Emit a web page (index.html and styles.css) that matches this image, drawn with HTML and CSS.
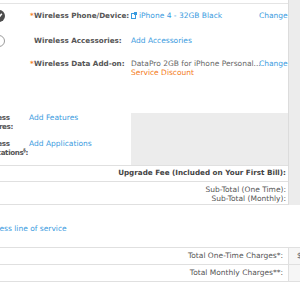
FILE: index.html
```
<!DOCTYPE html>
<html lang="en">
<head>
    <meta charset="UTF-8">
    <title>Review Your Order</title>
    <link rel="stylesheet" href="styles.css">
</head>
<body>
    <div class="page">
        <div class="upper">
            <div class="main">
                <div class="lines">
                    <div class="line">
                        <span class="step">
                            <svg width="12" height="12" viewBox="0 0 12 12"><circle cx="6" cy="6" r="6" fill="#4d4d4d"/><path d="M3.4 6.2 L5.2 8 L8.8 3.8" fill="none" stroke="#fff" stroke-width="1.6"/></svg>
                        </span>
                        <span class="label"><span class="star">*</span>Wireless Phone/Device:</span>
                        <a class="value link" href="#">
                            <svg class="ext" width="6" height="7" viewBox="0 0 6 7"><rect x="0.5" y="1.5" width="4" height="5" fill="none" stroke="#3a9be0"/><rect x="3" y="0" width="3" height="3" fill="#3a9be0"/></svg>iPhone 4 - 32GB Black
                        </a>
                        <a class="change" href="#">Change</a>
                    </div>
                    <div class="line">
                        <span class="step">
                            <svg width="12" height="12" viewBox="0 0 12 12"><circle cx="6" cy="6" r="5.5" fill="#fff" stroke="#9a9a9a"/></svg>
                        </span>
                        <span class="label"><span class="star"></span>Wireless Accessories:</span>
                        <a class="value link" href="#">Add Accessories</a>
                        <span></span>
                    </div>
                    <div class="line addon">
                        <span class="step"></span>
                        <span class="label"><span class="star">*</span>Wireless Data Add-on:</span>
                        <span class="value">DataPro 2GB for iPhone Personal...<br><span class="discount">Service Discount</span></span>
                        <a class="change" href="#">Change</a>
                    </div>
                </div>

                <div class="features">
                    <div class="feature-list">
                        <div class="feature">
                            <span class="flabel">Wireless<br>Features:</span>
                            <a class="link" href="#">Add Features</a>
                        </div>
                        <div class="feature">
                            <span class="flabel">Wireless<br>Applications<sup>§</sup>:</span>
                            <a class="link" href="#">Add Applications</a>
                        </div>
                    </div>
                    <div class="feature-box"></div>
                </div>

                <div class="fee">Upgrade Fee (Included on Your First Bill):</div>
                <div class="subtotals">
                    <div>Sub-Total (One Time):</div>
                    <div>Sub-Total (Monthly):</div>
                </div>
            </div>
            <div class="side"></div>
        </div>

        <div class="add-line"><a class="link" href="#">Add another wireless line of service</a></div>

        <div class="totals">
            <div class="total-row">
                <span class="total-label">Total One-Time Charges*:</span>
                <span class="total-value">$0.00</span>
            </div>
            <div class="total-row">
                <span class="total-label">Total Monthly Charges**:</span>
                <span class="total-value"></span>
            </div>
        </div>
    </div>
</body>
</html>
```

FILE: styles.css
```
body {
    margin: 0;
    padding: 0;
    background-color: #ffffff;
    font-family: "DejaVu Sans", Verdana, sans-serif;
    font-size: 7.5px;
    color: #555555;
    overflow: hidden;
}
a {
    text-decoration: none;
}
.page {
    width: 300px;
    overflow: hidden;
}
.link,
.change {
    color: #3a9be0;
}
.upper {
    display: flex;
}
.main {
    width: 288px;
    padding-top: 3px;
    overflow: hidden;
}
.side {
    flex: 1;
    background-color: #ececec;
    border-left: 1px solid #dcdcdc;
}
.lines {
    border-top: 1px solid #e4e4e4;
}
.line {
    display: grid;
    grid-template-columns: 30px 101px 128px 29px;
    line-height: 10px;
    padding: 7px 0 8px;
}
.line.addon {
    padding: 5px 0 3px;
    line-height: 9px;
}
.step {
    display: flex;
    align-items: center;
    height: 10px;
    margin-left: -7px;
}
.step svg {
    display: block;
    margin: -1px 0;
}
.label {
    font-weight: bold;
    font-size: 7.2px;
    color: #555555;
    white-space: nowrap;
}
.star {
    display: inline-block;
    width: 4px;
    color: #f47b20;
}
.value {
    white-space: nowrap;
    color: #666666;
}
.value.link {
    color: #3a9be0;
}
.ext {
    margin-right: 2px;
    vertical-align: -1px;
}
.discount {
    color: #f47b20;
}
.change {
    white-space: nowrap;
}
.features {
    display: flex;
}
.feature-list {
    width: 131px;
    padding: 33px 0 8px;
    overflow: hidden;
}
.feature {
    display: flex;
    line-height: 9px;
}
.feature + .feature {
    margin-top: 8px;
}
.flabel {
    width: 51px;
    margin-left: -22px;
    flex: none;
    font-weight: bold;
    font-size: 7.2px;
    letter-spacing: -0.4px;
    white-space: nowrap;
}
.flabel sup {
    font-size: 5px;
    line-height: 0;
}
.feature-box {
    flex: 1;
    margin-top: 33px;
    background-color: #ececec;
}
.fee {
    border-top: 1px solid #e0e0e0;
    padding: 2px 2px 3px 0;
    line-height: 10px;
    text-align: right;
    font-weight: bold;
    font-size: 7.2px;
    color: #444444;
}
.subtotals {
    border-top: 1px solid #e0e0e0;
    border-bottom: 1px solid #e0e0e0;
    padding: 2.5px 2px 1.5px 0;
    line-height: 9px;
    text-align: right;
}
.add-line {
    padding: 19px 0 13px;
    line-height: 10px;
    white-space: nowrap;
    overflow: hidden;
}
.add-line a {
    margin-left: -67px;
}
.totals {
    border-top: 1px solid #e0e0e0;
}
.total-row {
    display: flex;
    border-bottom: 1px solid #e0e0e0;
    line-height: 10px;
}
.total-label {
    box-sizing: border-box;
    flex: none;
    width: 289px;
    padding: 3px 5px 3px 0;
    text-align: right;
    border-right: 1px solid #e0e0e0;
}
.total-value {
    flex: 1;
    padding: 3px 0 3px 8px;
    background-color: #f6f6f6;
    white-space: nowrap;
    overflow: hidden;
}
```
